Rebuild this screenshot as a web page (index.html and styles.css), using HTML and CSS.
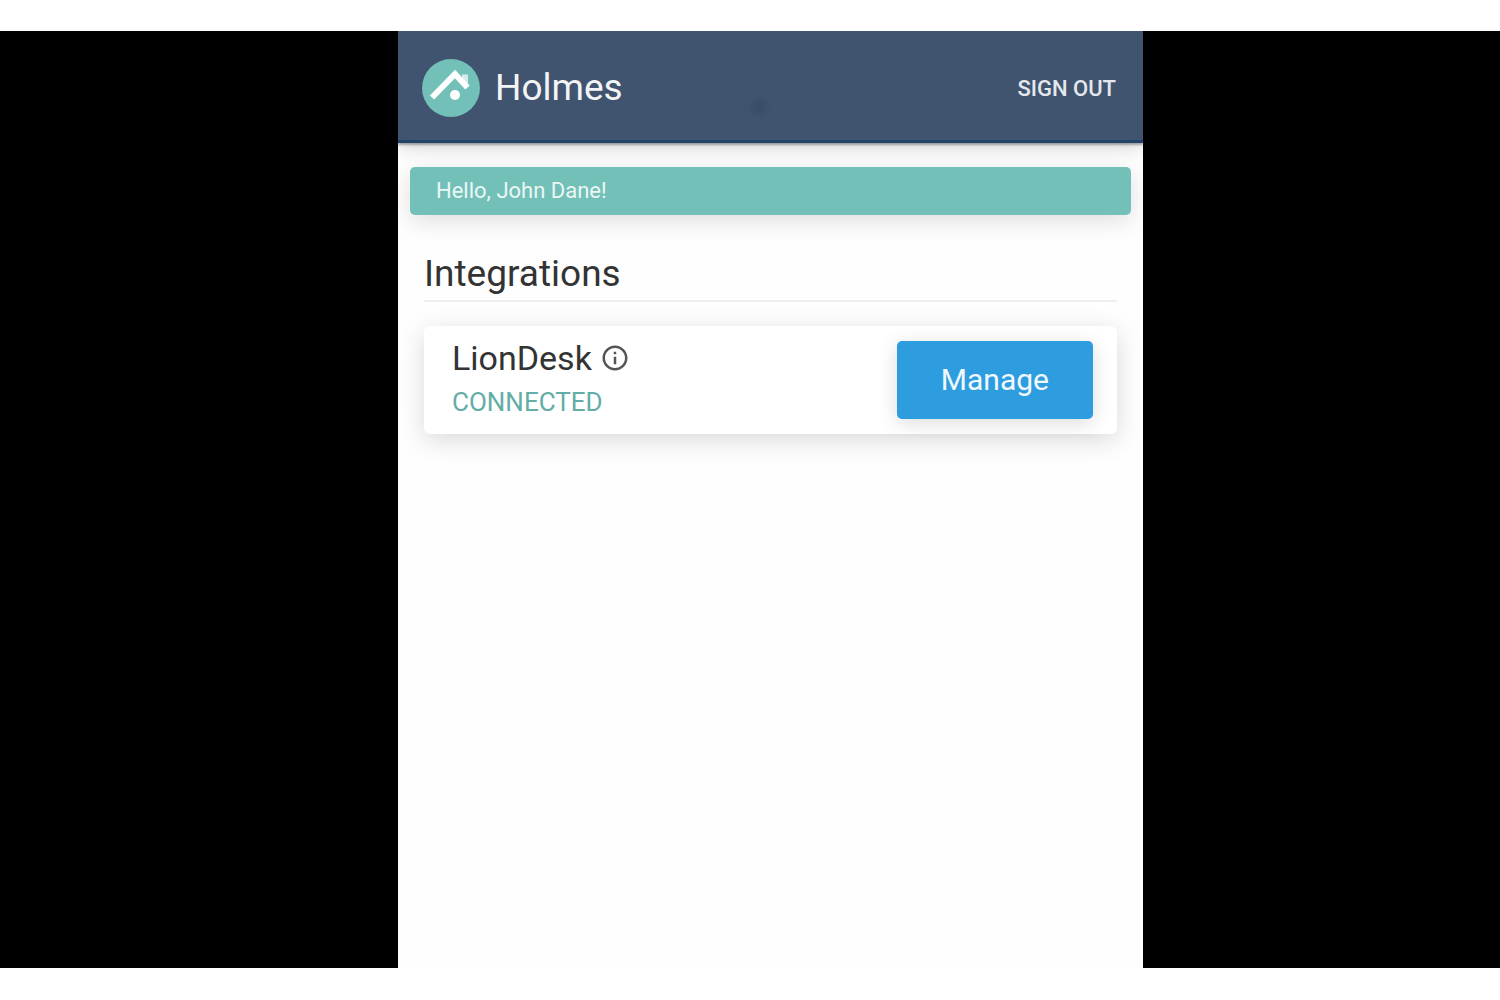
FILE: index.html
```html
<!DOCTYPE html>
<html lang="en">
<head>
  <meta charset="UTF-8">
  <meta name="viewport" content="width=device-width, initial-scale=1">
  <title>Holmes</title>
  <link rel="stylesheet" href="styles.css">
</head>
<body>

  <div class="stage">
    <div class="panel">
      <header class="topbar">
        <div class="brand">
          <svg class="logo" viewBox="0 0 58 58" aria-hidden="true">
            <circle cx="29" cy="29" r="29" fill="#72c0b8"/>
            <path d="M10 38.500 L33 15 L45.500 28.500" fill="none" stroke="#fff" stroke-width="6"/>
            <path d="M40 15.500 h6 v12 l-6 -6 z" fill="#fff" opacity="0.7"/>
            <circle cx="33" cy="36" r="5" fill="#fff"/>
          </svg>
          <span class="brand-name">Holmes</span>
        </div>
        <button class="sign-out" type="button">SIGN OUT</button>
      </header>

      <main class="content">
        <p class="greeting">Hello, John Dane!</p>

        <section class="integrations">
          <h1>Integrations</h1>
          <div class="card">
            <div class="card-info">
              <h2>
                LionDesk
                <svg class="info-icon" viewBox="0 0 24 24" aria-hidden="true">
                  <path d="M11 17h2v-6h-2v6zm1-15C6.480 2 2 6.480 2 12s4.480 10 10 10 10-4.480 10-10S17.520 2 12 2zm0 18c-4.410 0-8-3.590-8-8s3.590-8 8-8 8 3.590 8 8-3.590 8-8 8zM11 9h2V7h-2v2z"/>
                </svg>
              </h2>
              <span class="status">CONNECTED</span>
            </div>
            <button class="manage" type="button">Manage</button>
          </div>
        </section>
      </main>
    </div>
  </div>

</body>
</html>
```
FILE: styles.css
```css
* {
  box-sizing: border-box;
}

body {
  margin: 0;
  padding: 31px 0 32px;
  min-height: 100vh;
  display: flex;
  background: #fff;
  color: #333;
  font-family: Roboto, "Open Sans", sans-serif;
}

.stage {
  flex: 1;
  display: grid;
  grid-template-columns: 398fr 745fr 357fr;
  background: #000;
}

.panel {
  grid-column: 2;
  background: #fefefe;
  overflow: hidden;
}

.topbar {
  display: flex;
  justify-content: space-between;
  align-items: center;
  padding: 28px 27px 23px 24px;
  border-bottom: 3px solid #24436a;
  background: radial-gradient(circle at 361px 76px, #384d66 3px, #40546f 12px);
  box-shadow: 0 2px 2px rgba(0, 0, 0, 0.3), 0 3px 18px rgba(0, 0, 0, 0.2);
  color: #f2f4f6;
}

.brand {
  display: flex;
  align-items: center;
  gap: 15px;
}

.logo {
  width: 58px;
  height: 58px;
}

.brand-name {
  font-size: 37px;
  line-height: 58px;
}

button {
  border: none;
  font-family: inherit;
  cursor: pointer;
}

.sign-out {
  padding: 0;
  background: none;
  color: #e4e8ec;
  font-size: 22px;
  font-weight: 500;
}

.content {
  padding: 24px 12px;
}

.greeting {
  margin: 0;
  padding: 0 26px;
  border-radius: 5px;
  background: #72c0b8;
  box-shadow: 0 6px 24px rgba(0, 0, 0, 0.13);
  color: #eaf7f5;
  font-size: 22px;
  line-height: 48px;
}

.integrations {
  padding: 35px 14px 0;
}

h1 {
  margin: 0 0 24px;
  padding-bottom: 2px;
  border-bottom: 2px solid #eee;
  font-size: 37px;
  font-weight: 400;
  line-height: 48px;
}

.card {
  display: flex;
  justify-content: space-between;
  align-items: center;
  padding: 10px 24px 10px 28px;
  border-radius: 6px;
  background: #fff;
  box-shadow: 0 6px 26px rgba(0, 0, 0, 0.15);
}

h2 {
  display: flex;
  align-items: center;
  gap: 8px;
  margin: 0;
  font-size: 34px;
  font-weight: 400;
  line-height: 44px;
}

.info-icon {
  width: 30px;
  height: 30px;
  fill: #555;
}

.status {
  display: block;
  color: #62ada5;
  font-size: 26px;
  line-height: 44px;
}

.manage {
  padding: 0 44px;
  border-radius: 5px;
  background: #2d9de0;
  box-shadow: 0 4px 20px rgba(0, 0, 0, 0.14);
  color: #f0f8fd;
  font-size: 30px;
  line-height: 78px;
}
```
